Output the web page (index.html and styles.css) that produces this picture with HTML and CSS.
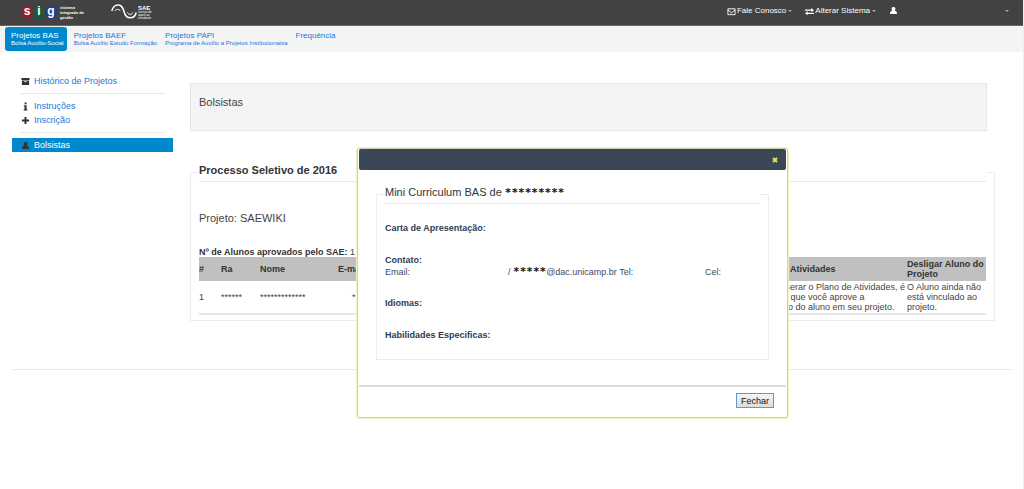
FILE: index.html
```html
<!DOCTYPE html>
<html lang="pt-BR">
<head>
<meta charset="utf-8">
<meta name="viewport" content="width=device-width, initial-scale=1">
<title>SIG - Bolsistas</title>
<link rel="stylesheet" href="styles.css">
</head>
<body>
<header class="topbar">
  <div class="brands">
    <a class="brand brand-sig" href="#">
      <span class="mark mark-s">s</span><span class="mark mark-i">i</span><span class="mark mark-g">g</span>
      <span class="tagline">sistema<br>integrado de<br>gestão</span>
    </a>
    <a class="brand brand-sae" href="#">
      <svg class="wave" viewBox="0 0 26 15" aria-hidden="true"><path d="M.8 7C2 2.5 4.5 1 7 1C11 1 12 4 13 7.5C14 11.5 15.5 13.8 19 13.8C22 13.8 24.5 12 25.2 8.5" fill="none" stroke="#fff" stroke-width="1.5"/><path d="M4 7C4.5 4.8 8.5 4.8 9.2 7M16.5 8.5C17.2 11 21 11 21.8 8.5" fill="none" stroke="#fff"/></svg>
      <span class="sae-text"><strong>SAE</strong><span>serviço de<br>apoio ao<br>estudante</span></span>
    </a>
  </div>
  <nav class="user-menu" aria-label="Usuário">
    <a class="menu-link menu-contact" href="#"><svg class="icon" viewBox="0 0 10 10" aria-hidden="true"><path d="M1 2H9V8.5H1ZM1 3.2L5 6.5L9 3.2" fill="none" stroke="currentColor"/></svg>Fale Conosco<i class="caret"></i></a>
    <a class="menu-link menu-system" href="#"><svg class="icon" viewBox="0 0 10 10" aria-hidden="true"><path d="M0 3.5H8M2 7H10" stroke="currentColor" stroke-width="1.3"/><path d="M7 1.2L10 3.5L7 5.6ZM3 4.8L0 7L3 9.3Z" fill="currentColor"/></svg>Alterar Sistema<i class="caret"></i></a>
    <a class="menu-link menu-user" href="#" aria-label="Conta"><svg class="icon" viewBox="0 0 10 10" aria-hidden="true"><path d="M5 1C7 1 7.4 2.5 7 4.2L6.5 5.3C8.5 5.6 9 7 8.8 9H1.2C1 7 1.5 5.6 3.5 5.3L3 4.2C2.6 2.5 3 1 5 1Z" fill="currentColor"/></svg><i class="caret"></i></a>
  </nav>
</header>
<nav class="tabs" aria-label="Projetos">
  <a class="tab tab-active" href="#">Projetos BAS<small>Bolsa Auxílio-Social</small></a>
  <a class="tab" href="#">Projetos BAEF<small>Bolsa Auxílio Estudo Formação</small></a>
  <a class="tab" href="#">Projetos PAPI<small>Programa de Auxílio a Projetos Institucionaisa</small></a>
  <a class="tab" href="#">Frequência</a>
</nav>
<div class="layout">
  <aside class="sidebar">
    <a class="side-link" href="#"><svg class="icon" viewBox="0 0 10 10" aria-hidden="true"><path d="M.5 1H9.5V3.4H.5ZM1 4H9V9H1Z" fill="#333"/><path d="M3.7 5.2H6.3" stroke="#fff"/></svg>Histórico de Projetos</a>
    <hr class="side-rule">
    <a class="side-link" href="#"><svg class="icon" viewBox="0 0 10 10" aria-hidden="true"><path d="M4 .5H6.2V2.4H4ZM3.2 3.6H6.2V8H7V9.5H3V8H3.9V5.1H3.2Z" fill="#333"/></svg>Instruções</a>
    <a class="side-link" href="#"><svg class="icon" viewBox="0 0 10 10" aria-hidden="true"><path d="M5 1V9M1 5H9" stroke="#333" stroke-width="2.2"/></svg>Inscrição</a>
    <hr class="side-rule">
    <a class="side-link side-active" href="#"><svg class="icon" viewBox="0 0 10 10" aria-hidden="true"><path d="M5 1C7 1 7.4 2.5 7 4.2L6.5 5.3C8.5 5.6 9 7 8.8 9H1.2C1 7 1.5 5.6 3.5 5.3L3 4.2C2.6 2.5 3 1 5 1Z" fill="#333"/></svg>Bolsistas</a>
  </aside>
  <main class="content">
    <h1 class="page-title">Bolsistas</h1>
    <fieldset class="group">
      <legend class="group-title group-strong">Processo Seletivo de 2016</legend>
      <p class="project">Projeto: SAEWIKI</p>
      <p class="approved"><strong>Nº de Alunos aprovados pelo SAE:</strong> 1</p>
      <table class="students">
        <colgroup><col class="col-num"><col class="col-ra"><col class="col-name"><col class="col-mail"><col class="col-plan"><col class="col-off"></colgroup>
        <thead>
          <tr><th>#</th><th>Ra</th><th>Nome</th><th>E-mail</th><th class="plan-head">Atividades</th><th>Desligar Aluno do Projeto</th></tr>
        </thead>
        <tbody>
          <tr><td>1</td><td>******</td><td>*************</td><td class="mail">*</td><td class="plan">Gerar o Plano de Atividades, é<br>o que você aprove a<br>ão do aluno em seu projeto.</td><td>O Aluno ainda não está vinculado ao projeto.</td></tr>
        </tbody>
      </table>
    </fieldset>
  </main>
</div>
<hr class="page-end">
<section class="modal" role="dialog" aria-labelledby="modal-title">
  <div class="modal-bar"><button class="modal-close" type="button" aria-label="Fechar janela"><svg class="cross" viewBox="0 0 6 6" aria-hidden="true"><path d="M1 1L5 5M5 1L1 5" stroke="#e6e65a" stroke-width="1.8"/></svg></button></div>
  <div class="modal-body">
    <fieldset class="group">
      <legend class="group-title" id="modal-title">Mini Curriculum BAS de <b class="masked">*********</b></legend>
      <dl class="resume">
        <dt>Carta de Apresentação:</dt><dd></dd>
        <dt>Contato:</dt>
        <dd class="contact"><span class="mail-label">Email:</span><span class="mail-value">/ <b class="masked">*****</b>@dac.unicamp.br Tel:</span><span>Cel:</span></dd>
        <dt>Idiomas:</dt><dd></dd>
        <dt>Habilidades Especificas:</dt>
      </dl>
    </fieldset>
  </div>
  <div class="modal-foot"><button class="close-button" type="button">Fechar</button></div>
</section>
</body>
</html>
```
FILE: styles.css
```css
* { box-sizing: border-box; }
body {
  margin: 0;
  min-height: 100vh;
  border-right: 1px solid #eee;
  background: #fff;
  color: #444;
  font: 9px/10px "Liberation Sans", Arial, sans-serif;
}
a { color: #1c76dd; text-decoration: none; }
.icon { width: 9px; height: 9px; flex: none; }

.topbar {
  display: flex;
  justify-content: space-between;
  height: 26px;
  padding: 0 14px 0 21px;
  background: #424242;
  border-bottom: 1px solid #666;
}
.brands { display: flex; align-items: flex-start; gap: 27px; }
.brand { display: flex; align-items: center; color: #fff; }
.brand-sig { padding-top: 5px; }
.mark {
  width: 12px;
  height: 13px;
  border-radius: 4px;
  font-size: 12px;
  font-weight: bold;
  line-height: 11px;
  text-align: center;
}
.mark-s { background: radial-gradient(#b0192c, #7a2733 60%, #424242); }
.mark-i { background: radial-gradient(#17663a, #255239 60%, #424242); }
.mark-g { background: radial-gradient(#1e3fa8, #283c80 60%, #424242); }
.tagline { margin-left: 3px; font-size: 4px; font-weight: bold; line-height: 5px; }
.brand-sae { padding-top: 3px; gap: 1px; }
.wave { width: 26px; height: 15px; }
.sae-text { display: flex; flex-direction: column; padding-top: 2px; font-size: 3px; line-height: 3px; }
.sae-text strong { font-size: 6px; line-height: 6px; }
.user-menu { display: flex; align-items: flex-start; gap: 13px; padding-top: 6px; }
.menu-link { display: flex; align-items: center; gap: 1px; color: #fff; font-size: 8px; }
.menu-user { width: 120px; justify-content: space-between; }
.caret { border: 2px solid transparent; border-top-color: #aaa; border-bottom: 0; margin-left: 1px; }

.tabs {
  display: flex;
  align-items: flex-start;
  height: 26px;
  padding: 1px 5px;
  gap: 1px;
  background: #f4f4f4;
}
.tab { height: 24px; padding: 4px 1px 4px 6px; font-size: 8px; line-height: 9px; }
.tab small { display: block; font-size: 6px; line-height: 6px; }
.tab-active { padding-right: 3px; border-radius: 3px; background: #0088cc; color: #fff; }

.layout { display: flex; gap: 17px; padding: 22px 28px 0 12px; }
.sidebar { flex: none; width: 161px; }
.side-link {
  display: flex;
  align-items: center;
  gap: 4px;
  height: 14px;
  padding-left: 9px;
}
.side-rule { height: 1px; margin: 5px 8px; border: 0; background: #e6e6e6; }
.side-active { background: #0088cc; color: #fff; }
.content { flex: 1; min-width: 0; }
.page-title {
  height: 48px;
  margin: 9px 8px 32px 0;
  padding: 12px 8px;
  border: 1px solid #e6e6e6;
  background: #f4f4f4;
  font-size: 11px;
  font-weight: normal;
  line-height: 12px;
}
.group { margin: 0; padding: 0 8px; border: 1px solid #ececec; }
.group-title {
  width: 100%;
  padding: 0 0 3px;
  border-bottom: 1px solid #e8e8e8;
  color: #333;
  font-size: 11px;
  line-height: 15px;
}
.group-strong { font-weight: bold; }
.project { margin: 29px 0 22px; font-size: 11px; line-height: 14px; }
.approved { margin: 0; line-height: 10px; }
.approved strong, th { color: #333; }
.students {
  width: 100%;
  margin-bottom: 5px;
  border-collapse: collapse;
  border-bottom: 2px solid #e6e6e6;
  table-layout: fixed;
}
.students th { height: 24px; padding: 0; background: #c0c0c0; text-align: left; }
.students td { height: 33px; padding: 0; }
.col-num { width: 22px; }
.col-ra { width: 39px; }
.col-name { width: 78px; }
.col-plan { width: 124px; }
.col-off { width: 79px; }
.students .mail { padding-left: 14px; }
.students .plan-head { padding-left: 7px; }
.plan { white-space: nowrap; }
.page-end { height: 1px; margin: 48px 12px 0; border: 0; background: #e6e6e6; }

.modal {
  position: absolute;
  top: 148px;
  left: 357px;
  width: 431px;
  padding: 0 1px 1px;
  border: 1px solid #cfd0b0;
  border-radius: 2px;
  outline: 1px solid #f3f3c0;
  background: #fff;
  color: #3b4b66;
}
.modal-bar {
  display: flex;
  align-items: center;
  justify-content: flex-end;
  height: 21px;
  padding-right: 8px;
  border-radius: 2px;
  background: #3b4754;
}
.modal-close { display: flex; padding: 0; border: 0; background: none; }
.cross { width: 6px; height: 6px; }
.modal-body { padding: 15px 17px 25px; }
.masked { color: #111; font: bold 11px/11px "DejaVu Sans Mono", monospace; }
.resume { margin: 0; padding: 19px 0 18px; }
.resume dt { color: #2c3d55; font-weight: bold; line-height: 11px; }
.resume dd { min-height: 21px; margin: 0; line-height: 11px; }
.resume .contact { min-height: 32px; }
.contact { display: flex; align-items: baseline; }
.mail-label { width: 123px; }
.mail-value { width: 197px; }
.modal-foot {
  display: flex;
  justify-content: flex-end;
  padding: 6px 12px 8px;
  border-top: 2px solid #ddd;
}
.close-button {
  height: 15px;
  padding: 0 4px;
  border: 1px solid #6a94cc;
  background: linear-gradient(#f5f5f5, #ddd);
  color: #111;
  font: 9px/12px "Liberation Sans", Arial, sans-serif;
}
```
